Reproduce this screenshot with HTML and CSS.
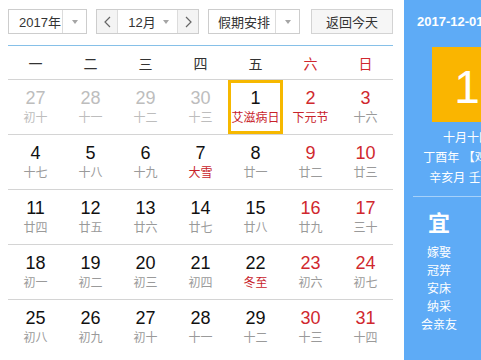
FILE: index.html
```html
<!DOCTYPE html>
<html lang="zh-CN">
<head>
<meta charset="utf-8">
<title>万年历</title>
<link rel="stylesheet" href="styles.css">
</head>
<body>
<div class="app">
  <div class="main">
    <div class="toolbar">
      <div class="select sel-year">
        <span class="sel-text">2017年</span>
        <span class="sel-arrow"><i class="tri"></i></span>
      </div>
      <div class="month-group">
        <span class="nav-btn nav-prev"><svg width="7" height="12" viewBox="0 0 7 12"><polyline points="6,1 1,6 6,11" fill="none" stroke="#666" stroke-width="1.2"/></svg></span>
        <span class="month-sel"><span class="month-text">12月</span><i class="tri"></i></span>
        <span class="nav-btn nav-next"><svg width="7" height="12" viewBox="0 0 7 12"><polyline points="1,1 6,6 1,11" fill="none" stroke="#666" stroke-width="1.2"/></svg></span>
      </div>
      <div class="select sel-holiday">
        <span class="sel-text">假期安排</span>
        <span class="sel-arrow"><i class="tri"></i></span>
      </div>
      <button class="today-btn">返回今天</button>
    </div>

    <div class="week-head">
      <span>一</span><span>二</span><span>三</span><span>四</span><span>五</span><span class="red">六</span><span class="red">日</span>
    </div>

    <div class="grid">
      <div class="row">
        <div class="cell other"><b>27</b><em>初十</em></div>
        <div class="cell other"><b>28</b><em>十一</em></div>
        <div class="cell other"><b>29</b><em>十二</em></div>
        <div class="cell other"><b>30</b><em>十三</em></div>
        <div class="cell selected"><b>1</b><em class="fest">艾滋病日</em></div>
        <div class="cell weekend"><b>2</b><em class="fest">下元节</em></div>
        <div class="cell weekend"><b>3</b><em>十六</em></div>
      </div>
      <div class="row">
        <div class="cell"><b>4</b><em>十七</em></div>
        <div class="cell"><b>5</b><em>十八</em></div>
        <div class="cell"><b>6</b><em>十九</em></div>
        <div class="cell"><b>7</b><em class="fest">大雪</em></div>
        <div class="cell"><b>8</b><em>廿一</em></div>
        <div class="cell weekend"><b>9</b><em>廿二</em></div>
        <div class="cell weekend"><b>10</b><em>廿三</em></div>
      </div>
      <div class="row">
        <div class="cell"><b>11</b><em>廿四</em></div>
        <div class="cell"><b>12</b><em>廿五</em></div>
        <div class="cell"><b>13</b><em>廿六</em></div>
        <div class="cell"><b>14</b><em>廿七</em></div>
        <div class="cell"><b>15</b><em>廿八</em></div>
        <div class="cell weekend"><b>16</b><em>廿九</em></div>
        <div class="cell weekend"><b>17</b><em>三十</em></div>
      </div>
      <div class="row">
        <div class="cell"><b>18</b><em>初一</em></div>
        <div class="cell"><b>19</b><em>初二</em></div>
        <div class="cell"><b>20</b><em>初三</em></div>
        <div class="cell"><b>21</b><em>初四</em></div>
        <div class="cell"><b>22</b><em class="fest">冬至</em></div>
        <div class="cell weekend"><b>23</b><em>初六</em></div>
        <div class="cell weekend"><b>24</b><em>初七</em></div>
      </div>
      <div class="row last">
        <div class="cell"><b>25</b><em>初八</em></div>
        <div class="cell"><b>26</b><em>初九</em></div>
        <div class="cell"><b>27</b><em>初十</em></div>
        <div class="cell"><b>28</b><em>十一</em></div>
        <div class="cell"><b>29</b><em>十二</em></div>
        <div class="cell weekend"><b>30</b><em>十三</em></div>
        <div class="cell weekend"><b>31</b><em>十四</em></div>
      </div>
    </div>
  </div>

  <aside class="panel">
    <div class="p-date">2017-12-01 星期五</div>
    <div class="p-day">1</div>
    <div class="p-lunar">
      <div>十月十四</div>
      <div>丁酉年 【鸡年】</div>
      <div>辛亥月 壬午日</div>
    </div>
    <div class="p-sep"></div>
    <div class="p-yiji">
      <div class="yj-col">
        <div class="yj-title">宜</div>
        <div class="yj-item">嫁娶</div>
        <div class="yj-item">冠笄</div>
        <div class="yj-item">安床</div>
        <div class="yj-item">纳采</div>
        <div class="yj-item">会亲友</div>
      </div>
      <div class="yj-col">
        <div class="yj-title">忌</div>
        <div class="yj-item">出行</div>
        <div class="yj-item">动土</div>
        <div class="yj-item">破土</div>
        <div class="yj-item">安葬</div>
      </div>
    </div>
  </aside>
</div>
</body>
</html>
```

FILE: styles.css
```css
html, body {
  margin: 0;
  padding: 0;
  background: #fff;
  overflow: hidden;
}

body {
  font-family: "Liberation Sans", "Noto Sans CJK SC", sans-serif;
  color: #1a1a1a;
}

.app {
  display: flex;
  width: 481px;
  height: 360px;
  overflow: hidden;
}

.main {
  flex: none;
  width: 385px;
  margin-left: 8px;
}

/* ---------- toolbar ---------- */
.toolbar {
  display: flex;
  align-items: flex-start;
  height: 46px;
  box-sizing: border-box;
  padding-top: 9px;
  border-bottom: 1px solid #86c0e8;
}

.select {
  display: flex;
  height: 25px;
  box-sizing: border-box;
  border: 1px solid #cdcdcd;
  background: #fff;
  font-size: 13px;
  color: #333;
}

.sel-text {
  flex: 1;
  display: flex;
  align-items: center;
  padding-left: 10px;
  white-space: nowrap;
}

.sel-arrow {
  flex: none;
  width: 23px;
  border-left: 1px solid #dcdcdc;
  display: flex;
  align-items: center;
  justify-content: center;
}

.tri {
  display: block;
  width: 0;
  height: 0;
  border-left: 3px solid transparent;
  border-right: 3px solid transparent;
  border-top: 4px solid #a5a5a5;
}

.sel-year {
  width: 79px;
}

.month-group {
  display: flex;
  width: 103px;
  height: 25px;
  box-sizing: border-box;
  margin-left: 9px;
  border: 1px solid #cdcdcd;
  font-size: 13px;
  color: #333;
}

.nav-btn {
  flex: none;
  width: 20px;
  display: flex;
  align-items: center;
  justify-content: center;
  background: #f4f4f4;
}

.nav-prev {
  border-right: 1px solid #dcdcdc;
}

.nav-next {
  border-left: 1px solid #dcdcdc;
}

.month-sel {
  flex: 1;
  display: flex;
  align-items: center;
  justify-content: center;
  gap: 7px;
  padding-left: 2px;
}

.sel-holiday {
  width: 92px;
  margin-left: 9px;
}

.sel-holiday .sel-text {
  padding-left: 9px;
}

.today-btn {
  width: 82px;
  height: 25px;
  margin-left: 11px;
  box-sizing: border-box;
  border: 1px solid #d3d3d3;
  background: #f6f6f6;
  font-family: "Liberation Sans", "Noto Sans CJK SC", sans-serif;
  font-size: 13px;
  color: #333;
  padding: 0;
}

/* ---------- week head ---------- */
.week-head {
  display: grid;
  grid-template-columns: repeat(7, 55px);
  height: 34px;
  box-sizing: border-box;
  border-bottom: 1px solid #d4d4d4;
  align-items: center;
  font-size: 14px;
  color: #333;
  text-align: center;
}

.red {
  color: #d0282e;
}

/* ---------- day grid ---------- */
.row {
  display: grid;
  grid-template-columns: repeat(7, 55px);
  height: 55px;
  box-sizing: border-box;
  border-bottom: 1px solid #d4d4d4;
}

.row.last {
  border-bottom: none;
}

.cell {
  display: flex;
  flex-direction: column;
  align-items: center;
  padding-top: 8px;
  box-sizing: border-box;
  height: 54px;
  white-space: nowrap;
}

.cell b {
  font-weight: normal;
  font-size: 18px;
  line-height: 20px;
  color: #111;
}

.cell em {
  font-style: normal;
  font-size: 12px;
  line-height: 18px;
  margin-top: 1px;
  color: #9a9a9a;
}

.cell.weekend b {
  color: #d0282e;
}

.cell em.fest {
  color: #c8232b;
}

.cell.other b,
.cell.other em {
  color: #bdbdbd;
}

.cell.selected {
  box-shadow: inset 0 0 0 3px #f6b800;
}

/* ---------- right panel ---------- */
.panel {
  flex: none;
  width: 140px;
  height: 360px;
  margin-left: 11px;
  background: #5eabf6;
  color: #fff;
}

.p-date {
  padding: 15px 0 0 13px;
  font-size: 13px;
  font-weight: bold;
  line-height: 14px;
  white-space: nowrap;
}

.p-day {
  width: 70px;
  height: 75px;
  margin: 18px 0 0 28px;
  background: #fab500;
  font-size: 46px;
  line-height: 80px;
  text-align: center;
  color: #fff;
}

.p-lunar {
  width: 126px;
  margin-top: 6px;
  text-align: center;
  font-size: 12px;
  line-height: 20px;
  white-space: nowrap;
}

.p-sep {
  width: 108px;
  height: 1px;
  margin: 8px 0 0 9px;
  background: rgba(255, 255, 255, 0.45);
}

.p-yiji {
  display: flex;
  margin-top: 14px;
}

.yj-col {
  width: 76px;
  text-align: center;
}

.yj-title {
  font-size: 22px;
  line-height: 26px;
  font-weight: bold;
  margin-bottom: 7px;
}

.yj-item {
  font-size: 12px;
  line-height: 18px;
  white-space: nowrap;
}
```
